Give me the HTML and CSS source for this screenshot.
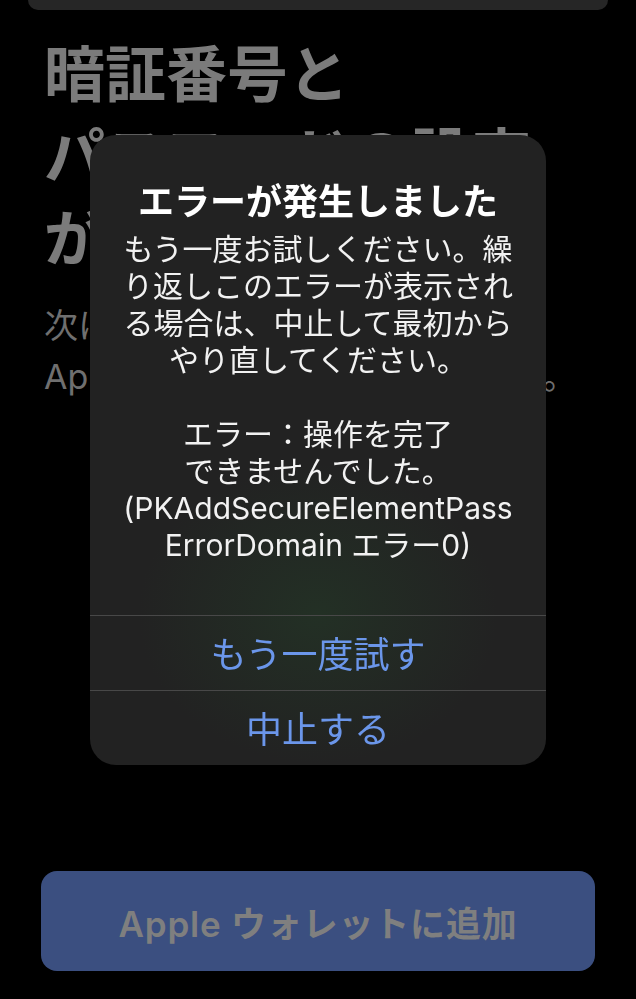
FILE: index.html
```html
<!DOCTYPE html>
<html lang="ja">
<head>
<meta charset="utf-8">
<title>エラーが発生しました</title>
<link rel="stylesheet" href="styles.css">
</head>
<body>
<div class="screen">
  <div class="top-card"></div>
  <h1 class="page-title">暗証番号と<br>パスワードの設定<br>が必要です</h1>
  <p class="page-sub">次にカードの設定を続けて、<br>Apple Payでカードを使用します。</p>
  <button class="add-button" type="button">Apple ウォレットに追加</button>
</div>

<div class="overlay">
  <div class="alert" role="alertdialog">
    <div class="alert-content">
      <h2 class="alert-title">エラーが発生しました</h2>
      <p class="alert-message">もう一度お試しください。繰<br>り返しこのエラーが表示され<br>る場合は、中止して最初から<br>やり直してください。<br><br>エラー：操作を完了<br>できませんでした。<br>(PKAddSecureElementPass<br>ErrorDomain エラー0)</p>
    </div>
    <div class="alert-actions">
      <button class="alert-action" type="button">もう一度試す</button>
      <button class="alert-action" type="button">中止する</button>
    </div>
  </div>
</div>
</body>
</html>
```

FILE: styles.css
```css
* { box-sizing: border-box; }

html, body {
  margin: 0;
  padding: 0;
  background: #000;
}

body {
  width: 636px;
  height: 999px;
  overflow: hidden;
  font-family: "Noto Sans CJK JP", "Noto Sans", sans-serif;
}

.screen {
  height: 999px;
  display: flex;
  flex-direction: column;
  padding: 0 41px 28px;
}

.top-card {
  height: 10px;
  margin: 0 -13px;
  background: #262626;
  border-radius: 0 0 22px 22px;
}

.page-title {
  margin: 20px 0 0 3px;
  font-size: 61px;
  line-height: 82px;
  font-weight: 700;
  color: #7b7b7b;
  white-space: nowrap;
}

.page-sub {
  margin: 24px 0 0 3px;
  font-family: Inter, "Noto Sans CJK JP", sans-serif;
  font-size: 34px;
  line-height: 51px;
  color: #6f6f6f;
  white-space: nowrap;
}

.add-button {
  margin-top: auto;
  height: 100px;
  width: 100%;
  border: 0;
  border-radius: 16px;
  background: #3b4f80;
  color: #7f7f7f;
  font-family: Inter, "Noto Sans CJK JP", sans-serif;
  font-size: 35px;
  letter-spacing: 0.8px;
  font-weight: 600;
}

.overlay {
  position: fixed;
  inset: 0;
  display: flex;
  justify-content: center;
  align-items: flex-start;
  padding-top: 135px;
}

.alert {
  width: 456px;
  border-radius: 26px;
  background:
    radial-gradient(ellipse 180px 150px at 50% 76%, rgba(36, 62, 40, 0.5), rgba(34, 34, 34, 0) 100%),
    #222222;
  overflow: hidden;
  color: #fff;
  text-align: center;
}

.alert-content {
  padding: 42px 28px 51px;
}

.alert-title {
  margin: 0 0 10px;
  font-size: 36px;
  line-height: 44px;
  font-weight: 700;
  white-space: nowrap;
}

.alert-message {
  margin: 0;
  font-family: Inter, "Noto Sans CJK JP", sans-serif;
  font-size: 30px;
  line-height: 37px;
  color: #f2f2f2;
  white-space: nowrap;
}

.alert-actions {
  display: flex;
  flex-direction: column;
}

.alert-action {
  height: 75px;
  border: 0;
  border-top: 1px solid #484848;
  background: transparent;
  color: #6b96ea;
  font-family: "Noto Sans CJK JP", sans-serif;
  font-size: 36px;
  padding: 0 0 2px;
}
```
